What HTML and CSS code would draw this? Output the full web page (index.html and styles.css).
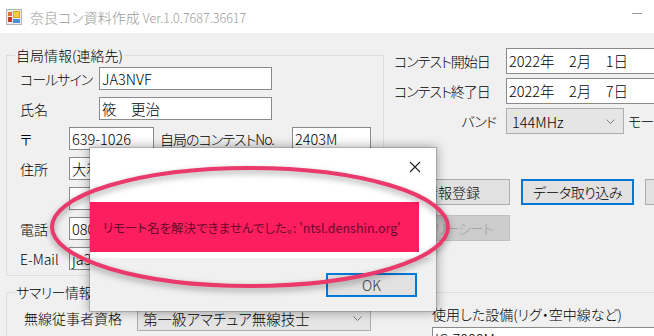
FILE: index.html
```html
<!DOCTYPE html>
<html lang="ja">
<head>
    <meta charset="UTF-8">
    <title>奈良コン資料作成</title>
    <link rel="stylesheet" href="styles.css">
</head>
<body>
    <div class="window">
        <div class="titlebar">
            <svg class="app-icon" width="16" height="16" viewBox="0 0 16 16">
                <rect x="0.5" y="0.5" width="15" height="15" fill="#ececec" stroke="#b4b4b4"/>
                <rect x="2" y="3" width="4" height="4" fill="#e8702a"/>
                <rect x="2" y="8" width="4" height="5" fill="#c43a2c"/>
                <rect x="7.5" y="2.5" width="6" height="6" fill="#f8cc44" stroke="#d9a520"/>
                <rect x="7" y="10" width="7" height="4" fill="#4a8fd8"/>
            </svg>
            <span class="title">奈良コン資料作成 <span class="ver">Ver.1.0.7687.36617</span></span>
            <span class="minimize"></span>
        </div>

        <div class="client">
            <div class="top">
                <fieldset class="group self">
                    <legend>自局情報(連絡先)</legend>
                    <div class="rows">
                        <div class="row"><span class="lbl lbl-w k">コールサイン</span><div class="tb w173">JA3NVF</div></div>
                        <div class="row"><span class="lbl lbl-w">氏名</span><div class="tb w173">筱　更治</div></div>
                        <div class="row">
                            <span class="lbl lbl-n">〒</span><div class="tb w85">639-1026</div>
                            <span class="lbl lbl-no k">自局のコンテストNo.</span><div class="tb w79">2403M</div>
                        </div>
                        <div class="row"><span class="lbl lbl-n">住所</span><div class="tb w302">大和郡山市</div></div>
                        <div class="row"><span class="lbl lbl-n"></span><div class="tb w302"></div></div>
                        <div class="row"><span class="lbl lbl-n">電話</span><div class="tb w200">0808</div></div>
                        <div class="row"><span class="lbl lbl-n">E-Mail</span><div class="tb w302">ja3nvf</div></div>
                    </div>
                </fieldset>

                <div class="right">
                    <div class="rrow"><span class="rlbl k">コンテスト開始日</span><div class="tb date">2022年　2月　1日</div></div>
                    <div class="rrow"><span class="rlbl k">コンテスト終了日</span><div class="tb date">2022年　2月　7日</div></div>
                    <div class="rrow">
                        <span class="rlbl ra k">バンド</span>
                        <div class="combo w118">
                            <span>144MHz</span>
                            <svg width="9" height="5" viewBox="0 0 9 5"><path d="M0.5 0.5 L4.5 4.5 L8.5 0.5" fill="none" stroke="#777" stroke-width="1"/></svg>
                        </div>
                        <span class="mode k">モード</span>
                    </div>
                    <div class="btns">
                        <div class="btn">情報登録</div>
                        <div class="btn focus k-half">データ取り込み</div>
                        <div class="btn"></div>
                        <div class="btn disabled k">サマリーシート</div>
                    </div>
                </div>
            </div>

            <fieldset class="group summary">
                <legend class="k-half">サマリー情報</legend>
                <div class="sum">
                    <div class="sum-left">
                        <span class="lbl lbl-q">無線従事者資格</span>
                        <div class="combo w234">
                            <span>第一級アマチュア無線技士</span>
                            <svg width="9" height="5" viewBox="0 0 9 5"><path d="M0.5 0.5 L4.5 4.5 L8.5 0.5" fill="none" stroke="#777" stroke-width="1"/></svg>
                        </div>
                    </div>
                    <div class="sum-right">
                        <span class="lbl">使用した設備(リグ・空中線など)</span>
                        <div class="tb w230">IC-7000M</div>
                    </div>
                </div>
            </fieldset>
        </div>

        <div class="dialog">
            <div class="dlg-body">
                <div class="dlg-head">
                    <svg width="12" height="12" viewBox="0 0 12 12"><path d="M1 1 L11 11 M11 1 L1 11" stroke="#222" stroke-width="1.1"/></svg>
                </div>
                <div class="dlg-msg">リモート名を解決できませんでした。: 'ntsl.denshin.org'</div>
            </div>
            <div class="dlg-foot">
                <div class="ok">OK</div>
            </div>
        </div>

        <svg class="mark" width="654" height="336" viewBox="0 0 654 336">
            <ellipse cx="250" cy="227" rx="198" ry="59" fill="none" stroke="#ea3a6c" stroke-width="4"/>
        </svg>
    </div>
</body>
</html>
```

FILE: styles.css
```css
body {
    margin: 0;
    font-family: "Noto Sans CJK JP", sans-serif;
    font-feature-settings: "palt";
    font-size: 14px;
    font-weight: 300;
    color: #000;
    background: #f0f0f0;
}
.window {
    position: relative;
    width: 654px;
    height: 336px;
    overflow: hidden;
}
.titlebar {
    height: 33px;
    background: #fff;
    display: flex;
    align-items: center;
}
.app-icon {
    margin-left: 6px;
    flex: none;
}
.title {
    margin-left: 8px;
    font-size: 14px;
    color: #9a9a9a;
    white-space: nowrap;
}
.title .ver {
    font-size: 12.5px;
}
.minimize {
    margin-left: auto;
    margin-right: 12px;
    width: 10px;
    border-top: 1px solid #999;
    align-self: flex-start;
    margin-top: 13px;
}
.client {
    padding: 13px 0 0 6px;
}
.top {
    display: flex;
    gap: 10px;
}
.group {
    margin: 0;
    padding: 0;
    border: 1px solid #dcdcdc;
    min-width: 0;
}
.group legend {
    margin-left: 8px;
    padding: 0 1px;
    line-height: 18px;
}
/* katakana labels sit tighter in the original UI font */
.k { letter-spacing: -1px; }
.k-half { letter-spacing: -0.5px; }
.self {
    width: 378px;
    box-sizing: border-box;
    flex: none;
}
.rows {
    display: flex;
    flex-direction: column;
    gap: 7px;
    padding: 3px 0 5px 13px;
}
.row {
    display: flex;
    align-items: center;
    height: 23px;
}
.lbl {
    white-space: nowrap;
    line-height: 18px;
}
.lbl-w { width: 79px; flex: none; }
.lbl-n { width: 49px; flex: none; }
.lbl-no { width: 132px; margin-left: 6px; flex: none; }
.lbl-q { width: 113px; flex: none; }
.tb {
    height: 23px;
    box-sizing: border-box;
    border: 1px solid #8a8a8a;
    background: #fff;
    padding: 0 2px;
    line-height: 21px;
    white-space: nowrap;
    overflow: hidden;
    flex: none;
    font-size: 14.5px;
}
.w173 { width: 173px; }
.w85 { width: 85px; }
.w79 { width: 79px; }
.w302 { width: 302px; }
.w200 { width: 200px; }
.w230 { width: 230px; }
.w118 { width: 118px; }
.w234 { width: 234px; }
.right {
    flex: 1;
    display: flex;
    flex-direction: column;
    gap: 4px;
    padding-top: 2px;
    min-width: 0;
}
.rrow {
    display: flex;
    align-items: center;
    height: 26px;
}
.rlbl {
    width: 112px;
    flex: none;
    white-space: nowrap;
}
.rlbl.ra {
    text-align: right;
    box-sizing: border-box;
    padding-right: 10px;
}
.date {
    width: 170px;
    height: 26px;
    line-height: 24px;
}
.combo {
    height: 26px;
    box-sizing: border-box;
    border: 1px solid #adadad;
    background: #e5e5e5;
    display: flex;
    align-items: center;
    justify-content: space-between;
    padding: 0 8px 0 5px;
    flex: none;
    white-space: nowrap;
    font-size: 14.5px;
}
.mode {
    margin-left: 4px;
    white-space: nowrap;
}
.btns {
    display: grid;
    grid-template-columns: 116px 113px 113px;
    grid-auto-rows: 26px;
    column-gap: 11px;
    row-gap: 10px;
    margin-top: 41px;
}
.btn {
    box-sizing: border-box;
    border: 1px solid #adadad;
    background: #e1e1e1;
    text-align: center;
    line-height: 24px;
    white-space: nowrap;
}
.btn.focus {
    border: 2px solid #0078d7;
    line-height: 22px;
}
.btn.disabled {
    background: #cccccc;
    border-color: #bfbfbf;
    color: #a0a0a0;
}
.summary {
    margin-top: 7px;
    width: 700px;
}
.sum {
    display: flex;
    padding: 4px 0 0 17px;
}
.sum-left {
    display: flex;
    align-items: center;
    height: 26px;
}
.sum-right {
    margin-left: 61px;
    display: flex;
    flex-direction: column;
    gap: 4px;
}
.dialog {
    position: absolute;
    left: 89px;
    top: 147px;
    width: 348px;
    height: 165px;
    box-sizing: border-box;
    border: 1px solid rgba(0, 0, 0, 0.3);
    box-shadow: 0 0 10px rgba(0, 0, 0, 0.35);
    display: flex;
    flex-direction: column;
    font-size: 12.5px;
}
.dlg-body {
    background: #fff;
    height: 110px;
}
.dlg-head {
    height: 54px;
    box-sizing: border-box;
    display: flex;
    justify-content: flex-end;
    padding: 13px 15px 0 0;
}
.dlg-msg {
    height: 50px;
    margin-right: 17px;
    background: #fd1e5f;
    color: #6a0a2a;
    font-weight: 400;
    display: flex;
    align-items: center;
    padding-left: 13px;
    white-space: nowrap;
}
.dlg-foot {
    flex: 1;
    background: #f0f0f0;
    display: flex;
    justify-content: flex-end;
    padding: 15px 19px 0 0;
}
.ok {
    width: 91px;
    height: 24px;
    box-sizing: border-box;
    border: 2px solid #0078d7;
    background: #e1e1e1;
    color: #333;
    text-align: center;
    line-height: 20px;
    font-size: 14px;
}
.mark {
    position: absolute;
    left: 0;
    top: 0;
    pointer-events: none;
    filter: drop-shadow(0 3px 3px rgba(0, 0, 0, 0.35));
}
```
